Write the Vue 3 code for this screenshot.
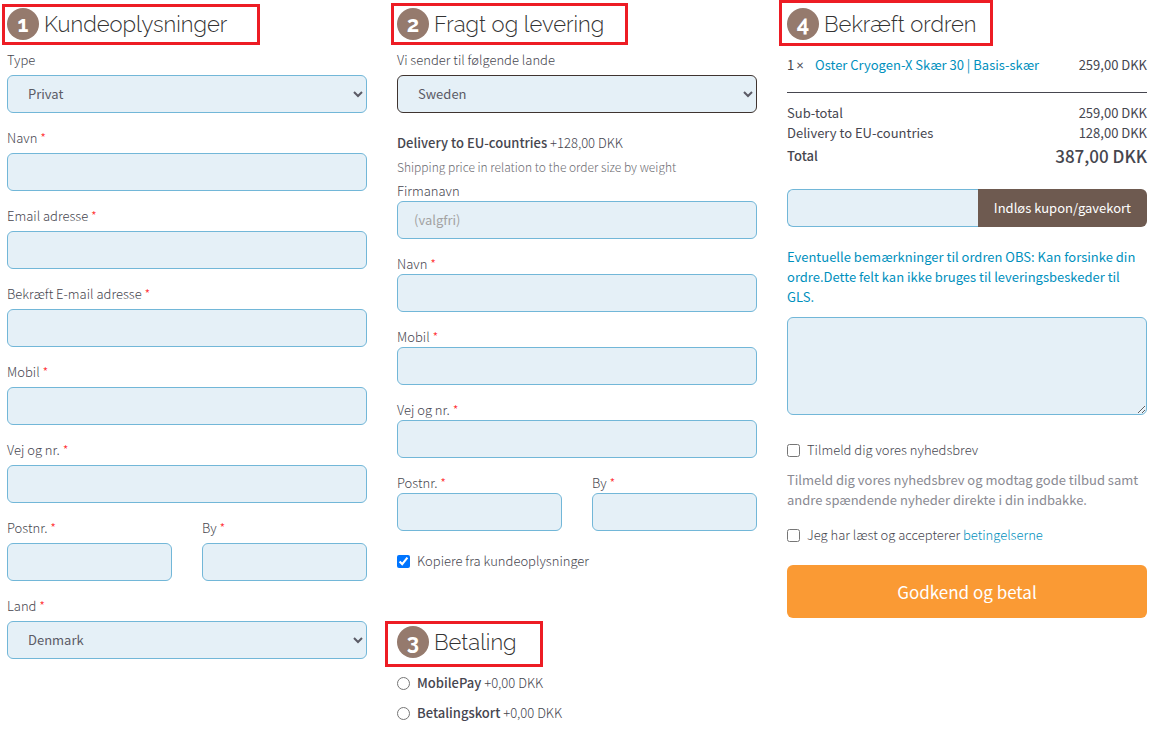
<script setup>
import { ref } from 'vue'

const customerFields = [
  { id: 'c-navn', label: 'Navn' },
  { id: 'c-email', label: 'Email adresse', type: 'email' },
  { id: 'c-email2', label: 'Bekræft E-mail adresse', type: 'email' },
  { id: 'c-mobil', label: 'Mobil', type: 'tel' },
  { id: 'c-vej', label: 'Vej og nr.' },
]
const deliveryFields = [
  { id: 'd-navn', label: 'Navn' },
  { id: 'd-mobil', label: 'Mobil', type: 'tel' },
  { id: 'd-vej', label: 'Vej og nr.' },
]
const payments = ['MobilePay', 'Betalingskort']

const customerType = ref('Privat')
const country = ref('Denmark')
const shipCountry = ref('Sweden')
const copyCustomer = ref(true)
const payment = ref('')
</script>

<template>
  <form class="checkout" @submit.prevent>
    <section class="customer">
      <h2 class="step step-customer"><span class="num">1</span>Kundeoplysninger</h2>
      <div class="field">
        <label for="c-type">Type</label>
        <select id="c-type" v-model="customerType" class="control">
          <option>Privat</option>
          <option>Firma</option>
        </select>
      </div>
      <div v-for="f in customerFields" :key="f.id" class="field">
        <label :for="f.id">{{ f.label }} <span class="req">*</span></label>
        <input :id="f.id" :type="f.type || 'text'" class="control" />
      </div>
      <div class="pair">
        <div class="field">
          <label for="c-post">Postnr. <span class="req">*</span></label>
          <input id="c-post" type="text" class="control" />
        </div>
        <div class="field">
          <label for="c-by">By <span class="req">*</span></label>
          <input id="c-by" type="text" class="control" />
        </div>
      </div>
      <div class="field">
        <label for="c-land">Land <span class="req">*</span></label>
        <select id="c-land" v-model="country" class="control">
          <option>Denmark</option>
          <option>Sweden</option>
        </select>
      </div>
    </section>

    <section class="delivery">
      <h2 class="step step-delivery"><span class="num">2</span>Fragt og levering</h2>
      <div class="field">
        <label for="d-land">Vi sender til følgende lande</label>
        <select id="d-land" v-model="shipCountry" class="control active">
          <option>Sweden</option>
          <option>Denmark</option>
        </select>
      </div>
      <p class="method"><strong>Delivery to EU-countries</strong> +128,00 DKK</p>
      <p class="hint">Shipping price in relation to the order size by weight</p>
      <div class="tight">
        <div class="field">
          <label for="d-firma">Firmanavn</label>
          <input id="d-firma" type="text" class="control" placeholder="(valgfri)" />
        </div>
        <div v-for="f in deliveryFields" :key="f.id" class="field">
          <label :for="f.id">{{ f.label }} <span class="req">*</span></label>
          <input :id="f.id" :type="f.type || 'text'" class="control" />
        </div>
        <div class="pair">
          <div class="field">
            <label for="d-post">Postnr. <span class="req">*</span></label>
            <input id="d-post" type="text" class="control" />
          </div>
          <div class="field">
            <label for="d-by">By <span class="req">*</span></label>
            <input id="d-by" type="text" class="control" />
          </div>
        </div>
      </div>
      <label class="choice copy"><input v-model="copyCustomer" type="checkbox" /><span>Kopiere fra kundeoplysninger</span></label>

      <h2 class="step step-payment"><span class="num">3</span>Betaling</h2>
      <div class="payments">
        <label v-for="p in payments" :key="p" class="choice">
          <input v-model="payment" type="radio" name="payment" :value="p" />
          <span><strong>{{ p }}</strong> +0,00 DKK</span>
        </label>
      </div>
    </section>

    <section class="confirm">
      <h2 class="step step-confirm"><span class="num">4</span>Bekræft ordren</h2>
      <div class="item">
        <span class="qty">1<span class="times">×</span></span>
        <a href="#">Oster Cryogen-X Skær 30 | Basis-skær</a>
        <span class="price">259,00 DKK</span>
      </div>
      <dl class="totals">
        <div><dt>Sub-total</dt><dd>259,00 DKK</dd></div>
        <div><dt>Delivery to EU-countries</dt><dd>128,00 DKK</dd></div>
        <div class="total"><dt>Total</dt><dd>387,00 DKK</dd></div>
      </dl>
      <div class="coupon">
        <input type="text" class="control" aria-label="Kupon/gavekort" />
        <button type="button">Indløs kupon/gavekort</button>
      </div>
      <label class="note" for="note">Eventuelle bemærkninger til ordren OBS: Kan forsinke din ordre.Dette felt kan ikke bruges til leveringsbeskeder til GLS.</label>
      <textarea id="note" class="control"></textarea>
      <label class="choice news"><input type="checkbox" /><span>Tilmeld dig vores nyhedsbrev</span></label>
      <p class="newstext">Tilmeld dig vores nyhedsbrev og modtag gode tilbud samt andre spændende nyheder direkte i din indbakke.</p>
      <div class="choice">
        <input id="terms" type="checkbox" />
        <span><label for="terms">Jeg har læst og accepterer</label> <a href="#">betingelserne</a></span>
      </div>
      <button type="submit" class="submit">Godkend og betal</button>
    </section>
  </form>
</template>

<style>
body {
  margin: 0;
  background: #fff;
}
</style>

<style scoped>
.checkout {
  display: grid;
  grid-template-columns: repeat(3, minmax(0, 1fr));
  gap: 30px;
  padding: 8px 9px 8px 7px;
  font-family: "Noto Sans CJK JP", "Noto Sans CJK SC", sans-serif;
  font-size: 13px;
  line-height: 20px;
  font-weight: 300;
  color: #46464f;
}
.checkout * {
  box-sizing: border-box;
}
p, dl, dd {
  margin: 0;
}
a {
  color: #0090bd;
  text-decoration: none;
}
strong {
  font-weight: 500;
}
.step {
  position: relative;
  display: flex;
  align-items: center;
  gap: 5px;
  width: fit-content;
  height: 32px;
  margin: 0 0 10px;
  font-family: Raleway, Lato, sans-serif;
  font-size: 22px;
  font-weight: 300;
  line-height: 32px;
  color: #333;
}
/* Highlight frame drawn over each step heading */
.step::after {
  content: "";
  position: absolute;
  border: 3px solid #ed1c24;
}
.step-customer::after { inset: -4px -33px -5px -5px; }
.step-delivery::after { inset: -5px -24px -5px -6px; }
.step-payment::after { inset: -5px -26px -9px -12px; }
.step-confirm::after { inset: -8px -16px -6px -8px; }
.num {
  width: 32px;
  height: 32px;
  border-radius: 50%;
  background: #957a6d;
  color: #fff;
  font-size: 22px;
  font-weight: 700;
  line-height: 32px;
  text-align: center;
}
.field {
  display: flex;
  flex-direction: column;
  gap: 5px;
  margin-bottom: 15px;
}
.tight .field {
  gap: 0;
}
.pair {
  display: grid;
  grid-template-columns: 1fr 1fr;
  gap: 30px;
}
.req {
  color: #f22;
}
.control {
  width: 100%;
  min-width: 0;
  height: 38px;
  padding: 0 16px 2px;
  border: 1px solid #72b7d8;
  border-radius: 6px;
  background-color: #e5f0f7;
  color: #5b5b66;
  font: inherit;
  font-weight: 400;
}
select.control {
  padding-right: 0;
}
.control.active {
  border-color: #3f3430;
}
.control::placeholder {
  color: #a3a3a3;
  opacity: 1;
}
.method {
  margin-top: 20px;
}
.hint {
  margin: 4px 0;
  font-size: 12px;
  color: #6c6c72;
}
.choice {
  display: flex;
  align-items: center;
  gap: 7px;
}
.choice input {
  flex: none;
  width: 13px;
  height: 13px;
  margin: 0;
}
.copy {
  margin-top: 5px;
}
.step-payment {
  margin: 55px 0 15px;
}
.payments {
  display: grid;
  gap: 10px;
}
.item {
  display: flex;
  margin-top: 15px;
  padding-bottom: 17px;
  border-bottom: 1px solid #46464f;
  font-weight: 400;
}
.qty {
  display: flex;
  gap: 2px;
  width: 28px;
}
.times {
  font-family: Lato, sans-serif;
}
.price {
  margin-left: auto;
}
.totals {
  margin-top: 10px;
  font-weight: 400;
}
.totals div {
  display: flex;
  justify-content: space-between;
}
.totals .total {
  margin-top: 3px;
  font-weight: 500;
}
.total dd {
  font-size: 17px;
}
.coupon {
  display: flex;
  margin: 23px 0 20px;
}
.coupon .control {
  flex: 1;
  border-right: 0;
  border-radius: 6px 0 0 6px;
}
.coupon button {
  flex: none;
  height: 38px;
  padding: 0 16px;
  border: 0;
  border-radius: 0 6px 6px 0;
  background: #6e5a50;
  color: #fff;
  font: inherit;
  font-weight: 400;
}
.note {
  display: block;
  margin-bottom: 10px;
  font-weight: 400;
  color: #0090bd;
}
textarea.control {
  display: block;
  height: 98px;
  padding: 8px 16px;
}
.news {
  margin-top: 25px;
}
.newstext {
  margin: 10px 0 15px;
  font-weight: 400;
  color: #8a8a92;
}
.submit {
  width: 100%;
  height: 53px;
  margin-top: 20px;
  border: 0;
  border-radius: 6px;
  background: #fa9a34;
  color: #fff;
  font: inherit;
  font-size: 17px;
  font-weight: 400;
}
</style>
